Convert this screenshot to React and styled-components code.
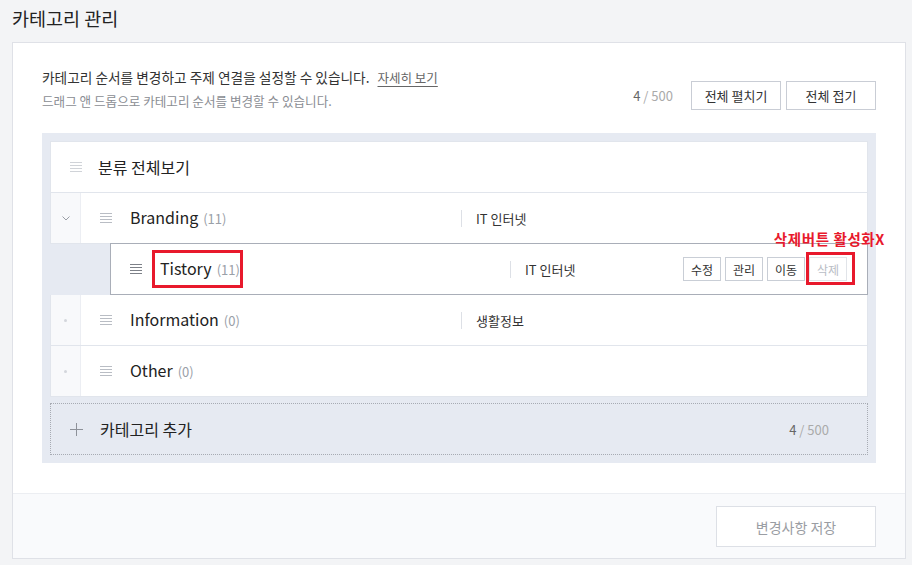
import React from 'react';
import styled, { createGlobalStyle, css } from 'styled-components';

const GlobalStyle = createGlobalStyle`
    body {
        margin: 0;
        background: #f3f4f6;
        font-family: "Noto Sans CJK KR", "Noto Sans", sans-serif;
        color: #333;
    }
`;

const Page = styled.div`
    padding: 5px 6px 6px 12px;
`;

const Title = styled.h1`
    margin: 0 0 11px;
    height: 26px;
    font-size: 18.5px;
    line-height: 26px;
    font-weight: 400;
    color: #222;
`;

const Card = styled.section`
    width: 894px;
    box-sizing: border-box;
    background: #fff;
    border: 1px solid #dfe1e7;
`;

const Body = styled.div`
    padding: 23px 29px 30px;
`;

const Header = styled.div`
    display: flex;
    align-items: flex-end;
    justify-content: space-between;
`;

const Lines = styled.div`
    line-height: 23px;
`;

const Line = styled.p`
    margin: 0;
    font-size: ${(p) => (p.muted ? '12.6px' : '13.7px')};
    color: ${(p) => (p.muted ? '#8a8d93' : '#333')};
`;

const MoreLink = styled.a`
    margin-left: 8px;
    color: #666;
    font-size: 12.5px;
    text-decoration: underline;
    text-underline-offset: 3px;
`;

const Tools = styled.div`
    display: flex;
    align-items: center;
    gap: 5px;
    margin-bottom: 2px;
`;

const Counter = styled.span`
    font-size: 13px;
    color: #666;
    margin-right: 13px;

    span {
        color: #aaa;
        margin-left: 3px;
    }
`;

const ToolButton = styled.button`
    width: 90px;
    height: 29px;
    box-sizing: border-box;
    background: #fff;
    border: 1px solid #c9cdd5;
    font-family: inherit;
    font-size: 13px;
    color: #333;
    padding: 0;
`;

const Board = styled.div`
    margin-top: 21px;
    background: #e6eaf2;
    padding: 8px;
`;

const Group = styled.div`
    display: flex;
    flex-direction: column;
`;

const Row = styled.div`
    display: flex;
    align-items: stretch;
    height: 51px;
    box-sizing: border-box;
    background: #fff;
    border: 1px solid #e1e5ec;
    border-top: none;

    &:first-child {
        height: 52px;
        border-top: 1px solid #e1e5ec;
    }

    ${(p) =>
        p.$child &&
        css`
            margin-left: 60px;
            margin-top: -1px;
            height: 52px;
            border: 1px solid #a9aeb8;
        `}
`;

const Side = styled.div`
    width: 29px;
    flex: none;
    display: flex;
    align-items: center;
    justify-content: center;
    background: #f8f9fb;
    border-right: 1px solid #eceef3;
`;

const Dot = styled.span`
    width: 3px;
    height: 3px;
    border-radius: 50%;
    background: #d3d6dc;
`;

const Main = styled.div`
    flex: 1;
    display: flex;
    align-items: center;
    padding-left: 19px;
    padding-right: 19px;
`;

const NameCell = styled.div`
    width: ${(p) => p.$width}px;
    flex: none;
    display: flex;
    align-items: center;
    box-sizing: border-box;
`;

const Handle = styled.span`
    display: flex;
    flex-direction: column;
    gap: 2px;
    width: 12px;
    margin-right: ${(p) => p.$gap || 18}px;

    i {
        display: block;
        height: 1px;
        background: ${(p) => p.$tone || '#b9bdc4'};
    }
`;

const Name = styled.span`
    font-size: 16px;
    color: #222;
    line-height: 24px;
    white-space: nowrap;
`;

const Count = styled.span`
    font-size: 13px;
    color: #9aa0a8;
    margin-left: 5px;
`;

const Marked = styled.span`
    position: relative;

    &::after {
        content: '';
        position: absolute;
        left: -8px;
        right: -3px;
        top: -6px;
        bottom: -6px;
        border: 3px solid #e8192c;
    }
`;

const Topic = styled.div`
    flex: 1;
    display: flex;
    align-items: center;
    font-size: 13px;
    color: #333;

    &::before {
        content: '';
        width: 1px;
        height: 17px;
        background: #dde0e6;
        margin-right: 14px;
    }
`;

const Actions = styled.div`
    display: flex;
    gap: 4px;
    margin-right: 1px;
`;

const ActionWrap = styled.span`
    position: relative;
    display: flex;

    ${(p) =>
        p.$marked &&
        css`
            &::after {
                content: '';
                position: absolute;
                left: -3px;
                right: -8px;
                top: -5px;
                bottom: -4px;
                border: 3px solid #e8192c;
            }
        `}
`;

const Note = styled.span`
    position: absolute;
    right: -38px;
    bottom: calc(100% + 9px);
    white-space: nowrap;
    font-size: 14.5px;
    line-height: 18px;
    font-weight: 700;
    color: #e8192c;
    letter-spacing: 0.6px;
`;

const ActionButton = styled.button`
    height: 24px;
    width: 38px;
    padding: 0;
    box-sizing: border-box;
    background: #fff;
    border: 1px solid ${(p) => (p.disabled ? '#e1e4e9' : '#c9ced6')};
    color: ${(p) => (p.disabled ? '#b9bdc5' : '#333')};
    font-family: inherit;
    font-size: 12px;
`;

const AddRow = styled.div`
    margin-top: 6px;
    height: 52px;
    box-sizing: border-box;
    border: 1px dotted #a7abb3;
    display: flex;
    align-items: center;
    padding: 0 25px 0 19px;
`;

const AddLabel = styled.span`
    flex: 1;
    font-size: 16px;
    line-height: 22px;
    color: #222;
    margin-left: 17px;
`;

const Footer = styled.div`
    display: flex;
    justify-content: flex-end;
    background: #f9fafc;
    border-top: 1px solid #eceef2;
    padding: 12px 29px 11px;
`;

const SaveButton = styled.button`
    width: 160px;
    height: 41px;
    background: #fff;
    border: 1px solid #dde0e6;
    color: #9a9da3;
    font-family: inherit;
    font-size: 14px;
`;

function Lines4({ tone, gap }) {
    return (
        <Handle $tone={tone} $gap={gap}>
            <i />
            <i />
            <i />
            <i />
        </Handle>
    );
}

function Chevron() {
    return (
        <svg width="8" height="5" viewBox="0 0 8 5">
            <path d="M0.5 0.5 L4 4 L7.5 0.5" fill="none" stroke="#9a9ea6" strokeWidth="1" />
        </svg>
    );
}

function Plus() {
    return (
        <svg width="13" height="13" viewBox="0 0 13 13">
            <path d="M6.5 0 V13 M0 6.5 H13" stroke="#8d9199" strokeWidth="1" />
        </svg>
    );
}

const categories = [
    { name: 'Branding', count: 11, topic: 'IT 인터넷', open: true },
    { name: 'Information', count: 0, topic: '생활정보' },
    { name: 'Other', count: 0, topic: '' },
];

export default function App() {
    return (
        <Page>
            <GlobalStyle />
            <Title>카테고리 관리</Title>
            <Card>
                <Body>
                    <Header>
                        <Lines>
                            <Line>
                                카테고리 순서를 변경하고 주제 연결을 설정할 수 있습니다.
                                <MoreLink>자세히 보기</MoreLink>
                            </Line>
                            <Line muted>드래그 앤 드롭으로 카테고리 순서를 변경할 수 있습니다.</Line>
                        </Lines>
                        <Tools>
                            <Counter>
                                4<span>/ 500</span>
                            </Counter>
                            <ToolButton>전체 펼치기</ToolButton>
                            <ToolButton>전체 접기</ToolButton>
                        </Tools>
                    </Header>

                    <Board>
                        <Group>
                            <Row>
                                <Main>
                                    <Lines4 tone="#d0d3d8" gap={16} />
                                    <Name>분류 전체보기</Name>
                                </Main>
                            </Row>
                            {categories.map((c) => (
                                <React.Fragment key={c.name}>
                                    <Row>
                                        <Side>{c.open ? <Chevron /> : <Dot />}</Side>
                                        <Main>
                                            <NameCell $width={361}>
                                                <Lines4 />
                                                <Name>
                                                    {c.name}
                                                    <Count>({c.count})</Count>
                                                </Name>
                                            </NameCell>
                                            {c.topic ? <Topic>{c.topic}</Topic> : null}
                                        </Main>
                                    </Row>
                                    {c.open ? (
                                        <Row $child>
                                            <Main>
                                                <NameCell $width={380}>
                                                    <Lines4 tone="#7d8188" />
                                                    <Marked>
                                                        <Name>
                                                            Tistory
                                                            <Count>(11)</Count>
                                                        </Name>
                                                    </Marked>
                                                </NameCell>
                                                <Topic>IT 인터넷</Topic>
                                                <Actions>
                                                    <ActionButton>수정</ActionButton>
                                                    <ActionButton>관리</ActionButton>
                                                    <ActionButton>이동</ActionButton>
                                                    <ActionWrap $marked>
                                                        <Note>삭제버튼 활성화X</Note>
                                                        <ActionButton disabled>삭제</ActionButton>
                                                    </ActionWrap>
                                                </Actions>
                                            </Main>
                                        </Row>
                                    ) : null}
                                </React.Fragment>
                            ))}
                        </Group>
                        <AddRow>
                            <Plus />
                            <AddLabel>카테고리 추가</AddLabel>
                            <Counter>
                                4<span>/ 500</span>
                            </Counter>
                        </AddRow>
                    </Board>
                </Body>
                <Footer>
                    <SaveButton>변경사항 저장</SaveButton>
                </Footer>
            </Card>
        </Page>
    );
}
